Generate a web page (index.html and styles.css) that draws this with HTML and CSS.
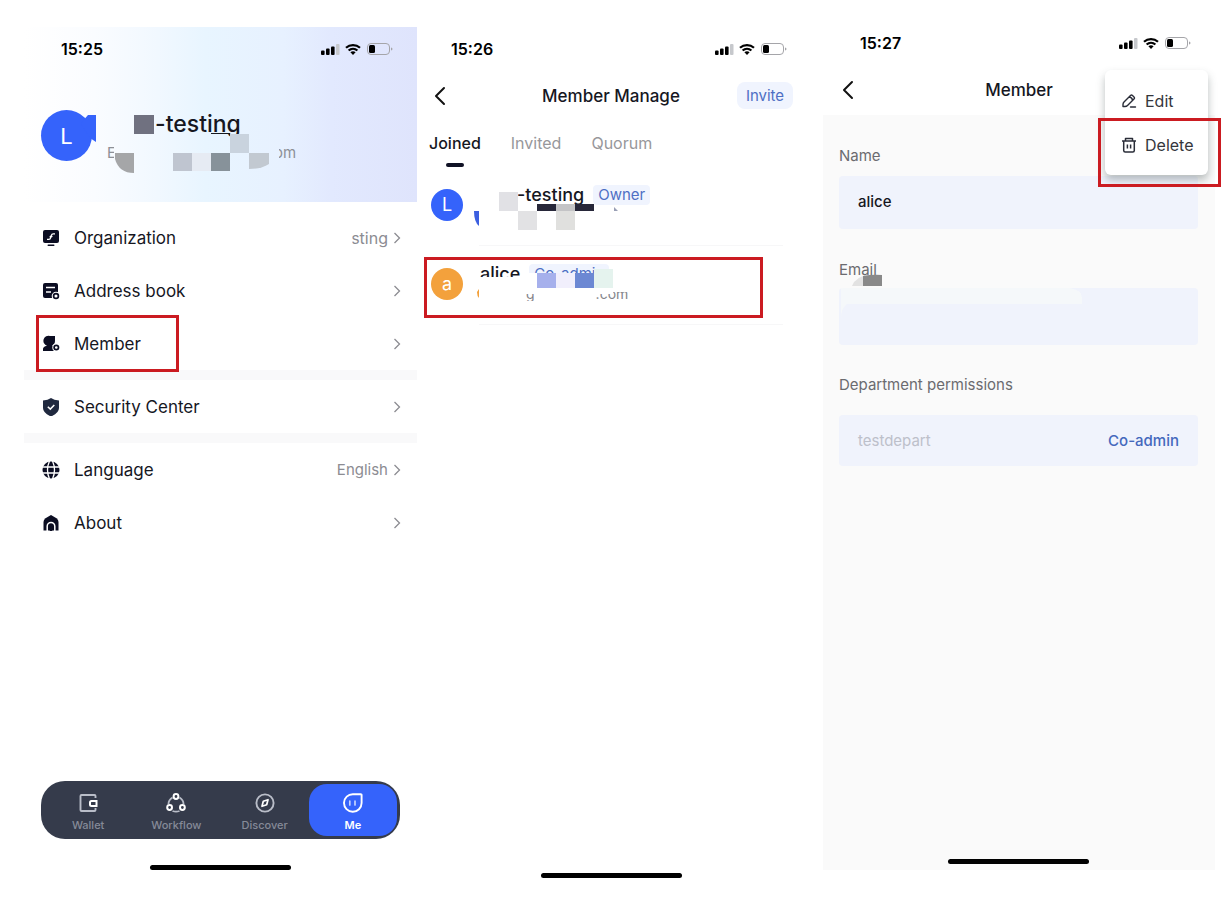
FILE: index.html
```html
<!DOCTYPE html>
<html lang="en">
<head>
<meta charset="utf-8">
<meta name="viewport" content="width=device-width, initial-scale=1">
<title>Member management</title>
<link rel="stylesheet" href="styles.css">
</head>
<body>
<svg class="sprite" aria-hidden="true">
  <symbol id="status" viewBox="0 0 72 14">
    <rect x="0" y="8.500" width="3.600" height="4.500" rx="1"/><rect x="5" y="6.500" width="3.600" height="6.500" rx="1"/><rect x="10" y="4.500" width="3.600" height="8.500" rx="1"/><rect x="15" y="2" width="3.500" height="11" rx="1" fill="#c6c8cc"/>
    <path d="M25 5.800a10.400 10.400 0 0 1 14 0M27.600 8.500a6.600 6.600 0 0 1 8.800 0" fill="none" stroke="#000" stroke-width="2.200"/><path d="M29.400 10.300a4 4 0 0 1 5.200 0L32 13z"/>
    <rect x="46.500" y="1.500" width="22" height="11" rx="3.500" fill="none" stroke="#a5a5a9"/><rect x="48" y="3" width="6" height="8" rx="1.500"/><path d="M70 5.500v3q1.500-.3 1.500-1.500t-1.500-1.500z" fill="#a5a5a9"/>
  </symbol>
  <symbol id="chev" viewBox="0 0 8 12"><path d="M1.500 1l5 5-5 5" fill="none" stroke="#8c8c92" stroke-width="1.300"/></symbol>
  <symbol id="back" viewBox="0 0 12 20"><path d="M10 2L2 10l8 8" fill="none" stroke="#111" stroke-width="2" stroke-linecap="round" stroke-linejoin="round"/></symbol>
</svg>
<main class="screens">
  <section class="phone phone-me">
    <header class="hero">
      <div class="status"><span>15:25</span><svg class="status-icons"><use href="#status"/></svg></div>
      <div class="profile">
        <span class="avatar avatar-lg">L</span>
        <div class="profile-text">
          <h1>-testing</h1>
          <p><span class="mail-start">E</span><span class="mail-end">om</span></p>
        </div>
        <svg class="mosaic" viewBox="0 0 280 70" aria-hidden="true">
          <path d="M40 14q3-5 7-9h8v27l-6-4z" fill="#3563fb"/>
          <rect x="93" y="5" width="20" height="19" fill="#707180"/>
          <rect x="170" y="23" width="19" height="1" fill="#17191f"/>
          <rect x="189" y="24" width="19" height="19" fill="#c9d3de"/>
          <path d="M74 43h19v20q-15 0-19-14z" fill="#a5a6a8"/>
          <rect x="132" y="43" width="19" height="18" fill="#bfc5d0"/>
          <rect x="151" y="43" width="19" height="18" fill="#e6ebf3"/>
          <rect x="170" y="43" width="19" height="18" fill="#87929a"/>
          <path d="M208 43h20v11q-8 5-20 5z" fill="#c2c9d1"/>
        </svg>
      </div>
    </header>
    <nav class="settings" aria-label="Settings">
      <a href="#"><svg viewBox="0 0 18 18"><path d="M3 1h12q2 0 2 2v9q0 2-2 2H3q-2 0-2-2V3q0-2 2-2z" fill="#0b0d22"/><rect x="5.500" y="15.500" width="7" height="1.500" rx=".7" fill="#0b0d22"/><path d="M13 4.800h-1.800q-1.500 0-1.700 1.400T7.600 7.800M10.500 7.400q-1.700 0-1.900 1.400T6.800 10.300H5" fill="none" stroke="#fff" stroke-width="1.300"/></svg><span class="label">Organization</span><span class="value cut">sting</span><svg class="chev"><use href="#chev"/></svg></a>
      <a href="#"><svg viewBox="0 0 18 18"><path d="M3 1h11q2 0 2 2v13H3q-2 0-2-2V3q0-2 2-2z" fill="#0b0d22"/><path d="M4 5.500h9M4 10h5" stroke="#fff" stroke-width="1.500"/><circle cx="14" cy="14" r="4.300" fill="#fff"/><circle cx="14" cy="14" r="2.400" fill="none" stroke="#0b0d22" stroke-width="1.700"/></svg><span class="label">Address book</span><svg class="chev"><use href="#chev"/></svg></a>
      <a href="#" class="marked"><svg viewBox="0 0 18 18"><path d="M8 1h5v5a4.800 4.800 0 0 1-3 4.500l2 .8V16H1v-2q0-2.500 4-3.300A5 5 0 0 1 8 1z" fill="#0b0d22"/><circle cx="14.300" cy="12.500" r="4" fill="#fff"/><circle cx="14.300" cy="12.500" r="2.200" fill="none" stroke="#0b0d22" stroke-width="1.700"/></svg><span class="label">Member</span><svg class="chev"><use href="#chev"/></svg></a>
      <hr>
      <a href="#"><svg viewBox="0 0 18 18"><path d="M9 0q3 2 8 2.500V10q0 5-8 8.500Q1 15 1 10V2.500Q6 2 9 0z" fill="#20293f"/><path d="M5.800 8.700l2.500 2.400 4-4.200" fill="none" stroke="#fff" stroke-width="1.500"/></svg><span class="label">Security Center</span><svg class="chev"><use href="#chev"/></svg></a>
      <hr>
      <a href="#"><svg viewBox="0 0 18 18"><circle cx="9" cy="9" r="8.500" fill="#0b0d22"/><path d="M0 6h18M0 12h18M7.500 0Q3.500 9 7.500 18M10.500 0q4 9 0 18" fill="none" stroke="#fff" stroke-width="1.300"/></svg><span class="label">Language</span><span class="value">English</span><svg class="chev"><use href="#chev"/></svg></a>
      <a href="#"><svg viewBox="0 0 18 18"><path d="M9 1l5.500 3.300Q16.500 6 16.500 8v8.500h-15V8q0-2 2-3.700z" fill="#0b0d22"/><path d="M5.200 17v-4.800a3.800 3.800 0 0 1 7.600 0V17" fill="none" stroke="#fff" stroke-width="1.500"/><path d="M9 12v5" stroke="#0b0d22" stroke-width="2.500"/></svg><span class="label">About</span><svg class="chev"><use href="#chev"/></svg></a>
    </nav>
    <nav class="tabbar" aria-label="Main">
      <a href="#"><svg viewBox="0 0 20 20"><path d="M17.500 5V3q0-1-1-1h-13q-1 0-1 1v14q0 1 1 1h13q1 0 1-1v-2" fill="none" stroke="#b9bdc8" stroke-width="1.900"/><path d="M18.500 8v5h-5q-1.500 0-1.500-1.500v-2Q12 8 13.500 8z" fill="none" stroke="#fff" stroke-width="2"/></svg>Wallet</a>
      <a href="#"><svg viewBox="0 0 20 20"><path d="M6.500 4.500Q2.500 7 2.500 11M13.500 4.500q4 2.500 4 6.500M6.500 18q3.500 1.300 7 0" fill="none" stroke="#b9bdc8" stroke-width="1.800"/><g fill="#353b4b" stroke="#fff" stroke-width="2"><circle cx="10" cy="3.500" r="2.400"/><circle cx="3.600" cy="14.500" r="2.400"/><circle cx="16.400" cy="14.500" r="2.400"/></g></svg>Workflow</a>
      <a href="#"><svg viewBox="0 0 20 20"><circle cx="10" cy="10" r="8.600" fill="none" stroke="#b9bdc8" stroke-width="1.900"/><path d="M13 6.700l-1.300 5L7 13.300l1.300-5z" fill="none" stroke="#fff" stroke-width="1.700" stroke-linejoin="round"/></svg>Discover</a>
      <a href="#" class="active" aria-current="page"><svg viewBox="0 0 20 20"><path d="M18.600 10V2q0-.8-.8-.8H10A8.800 8.800 0 1 0 18.600 10z" fill="none" stroke="#fff" stroke-width="1.900"/><path d="M6.800 8v4M12 8v4" stroke="#c5d3ff" stroke-width="1.700" stroke-linecap="round"/></svg>Me</a>
    </nav>
    <div class="home"></div>
  </section>

  <section class="phone phone-members">
    <div class="status"><span>15:26</span><svg class="status-icons"><use href="#status"/></svg></div>
    <header class="topbar">
      <button class="back" aria-label="Back"><svg viewBox="0 0 12 20"><use href="#back"/></svg></button>
      <h2>Member Manage</h2>
      <button class="invite">Invite</button>
    </header>
    <div class="tabs" role="tablist">
      <button role="tab" aria-selected="true">Joined</button>
      <button role="tab" aria-selected="false">Invited</button>
      <button role="tab" aria-selected="false">Quorum</button>
    </div>
    <ul class="members">
      <li>
        <span class="avatar">L</span>
        <div class="member owner"><b>-testing</b><span class="badge">Owner</span></div>
        <svg class="mosaic" viewBox="0 0 150 50" aria-hidden="true">
          <path d="M0 26h5v15Q0 37 0 26z" fill="#3c5fe0"/>
          <rect x="25" y="7" width="19" height="19" fill="#e1e1e5"/>
          <rect x="63" y="19" width="57" height="7" fill="#272739"/><rect x="82" y="19" width="19" height="7" fill="#c4c4c6"/>
          <rect x="44" y="26" width="19" height="19" fill="#e2e2e4"/><rect x="82" y="26" width="19" height="19" fill="#e0e0de"/>
          <path d="M140 22l4 4h-4z" fill="#999fb5"/>
        </svg>
      </li>
      <li class="marked">
        <span class="avatar orange">a</span>
        <div class="member coadmin"><b>alice</b><span class="badge">Co-admin</span><small><span>g</span><span>.com</span></small></div>
        <svg class="mosaic" viewBox="0 0 150 50" aria-hidden="true">
          <path d="M3 28l2-3v9q-2-2-2-6z" fill="#f3a13c"/>
          <path d="M5 13h49V9h85v21H5z" fill="#fff"/>
          <rect x="63" y="9" width="19" height="15" fill="#a6b0ec"/><rect x="82" y="9" width="19" height="15" fill="#f1effc"/><rect x="101" y="9" width="19" height="15" fill="#6c88d3"/><rect x="120" y="5" width="19" height="19" fill="#e5f3ee"/>
        </svg>
      </li>
    </ul>
    <div class="home"></div>
  </section>

  <section class="phone phone-detail">
    <div class="status"><span>15:27</span><svg class="status-icons"><use href="#status"/></svg></div>
    <header class="topbar">
      <button class="back" aria-label="Back"><svg viewBox="0 0 12 20"><use href="#back"/></svg></button>
      <h2>Member</h2>
      <span></span>
    </header>
    <form class="details">
      <label for="name">Name</label>
      <input id="name" value="alice">
      <label for="email">Email</label>
      <div class="email">
        <input id="email" type="email">
        <svg class="mosaic" viewBox="0 0 250 50" aria-hidden="true"><path d="M13 13q4-10 17-11h13v11z" fill="#e2e2e2"/><path d="M24 3q10-2 19-1v11H24z" fill="#898989"/><path d="M2 15h229q12 2 12 10v6H8q-6 4-6 15z" fill="#f7f9fa" opacity=".75"/></svg>
      </div>
      <h3>Department permissions</h3>
      <div class="dept"><span>testdepart</span><a href="#">Co-admin</a></div>
      <div class="home"></div>
    </form>
    <div class="menu">
      <button><svg viewBox="0 0 16 16"><path d="M3 9l6.500-6.500q1-1 2 0L13 4q1 1 0 2l-6.500 6.500q-1 1-2.500 1H2v-2q0-1.500 1-2.500zM8.300 4q2.800.4 3.200 3.200M9.500 14h5" fill="none" stroke="#2a2d38" stroke-width="1.400" stroke-linecap="round" stroke-linejoin="round"/></svg>Edit</button>
      <button><svg viewBox="0 0 16 16"><path d="M1 4h14M4.500 4V1.500h7V4M2.700 4v9.500q0 1.500 1.500 1.500h7.600q1.500 0 1.500-1.500V4M6.400 7.500v4M9.600 7.500v4" fill="none" stroke="#2a2d38" stroke-width="1.500" stroke-linejoin="round"/></svg>Delete</button>
    </div>
    <div class="menu-mark"></div>
  </section>
</main>
</body>
</html>
```

FILE: styles.css
```css
*, *::before, *::after { box-sizing: border-box; }
body { margin: 0; background: #fff; color: #16171f; font-family: Inter, "Liberation Sans", sans-serif; font-size: 16px; line-height: 20px; }
h1, h2, h3, p, ul { margin: 0; padding: 0; }
ul { list-style: none; }
a { color: inherit; text-decoration: none; }
button { border: 0; padding: 0; background: none; font: inherit; color: inherit; }
.sprite { position: absolute; width: 0; height: 0; }
.screens { display: grid; grid-template-columns: 393fr 406fr 392fr; min-height: 100vh; padding: 0 16px 0 24px; }
.phone { position: relative; display: flex; flex-direction: column; min-width: 0; }
.status { display: flex; align-items: center; justify-content: space-between; height: 20px; font-size: 16px; font-weight: 600; color: #000; }
.status-icons { width: 72px; height: 14px; }
.home { width: 141px; height: 5px; border-radius: 3px; background: #000; align-self: center; }
.mosaic { position: absolute; pointer-events: none; }
.avatar { display: grid; place-items: center; flex: none; width: 32px; height: 32px; border-radius: 50%; background: #3563fb; color: #fff; font-size: 18px; }
.avatar-lg { width: 51px; height: 51px; font-size: 22px; }
.orange { background: #f3a13c; }

.phone-me { padding: 27px 0 30px; }
.hero { height: 175px; background: linear-gradient(90deg, #fff 0%, #fafcff 18%, #f1f8ff 34%, #e8f5ff 46%, #e7f1ff 66%, #e2e9fe 78%, #dfe4fc 100%); }
.phone-me .status { padding: 0 24px 0 37px; margin-top: 12px; }
.profile { position: relative; display: flex; padding: 0 17px; margin-top: 51px; }
.profile .mosaic { left: 17px; top: 0; width: 280px; height: 70px; }
.profile-text { padding-left: 15px; }
.profile h1 { padding-left: 48px; font-size: 23px; line-height: 28px; font-weight: 500; }
.profile p { display: flex; gap: 160px; margin-top: 5px; color: #8d9097; font-size: 15px; }
.mail-start { width: 7px; overflow: hidden; }
.mail-end { clip-path: inset(0 0 0 5px); }
.settings { padding-top: 9px; }
.settings a { position: relative; display: flex; align-items: center; height: 53px; padding: 0 16px 0 18px; }
.settings a > svg { flex: none; width: 18px; height: 18px; }
.settings a > .chev { width: 8px; height: 12px; margin-left: 5px; }
.label { flex: 1; padding-left: 14px; font-size: 17px; }
.value { color: #8c8c92; font-size: 15px; }
.cut { font-size: 16px; clip-path: inset(0 0 0 1px); }
.settings hr { width: 100%; height: 10px; margin: 0; border: 0; background: #f9f9fa; }
.settings .marked::after { content: ""; position: absolute; left: 12px; top: -2px; width: 143px; height: 57px; border: 3px solid #cb1b21; }
.tabbar { display: grid; grid-template-columns: repeat(4, 1fr); height: 58px; margin: auto 17px 26px; padding: 3px; border-radius: 24px; background: #353b4b; color: #858a98; font-size: 11px; font-weight: 500; line-height: 14px; }
.tabbar a { display: flex; flex-direction: column; align-items: center; gap: 5px; padding-top: 9px; border-radius: 18px; }
.tabbar svg { width: 20px; height: 20px; }
.tabbar .active { background: #3563fb; color: #fff; font-weight: 600; }

.phone-members { padding: 39px 30px 22px 12px; }
.phone-members .status { padding: 0 6px 0 22px; }
.phone-members .home { margin-top: auto; }
.topbar { display: grid; grid-template-columns: 60px 1fr 60px; align-items: center; height: 27px; margin-top: 23px; }
.topbar h2 { text-align: center; font-size: 17px; font-weight: 500; }
.back { display: flex; padding-left: 5px; }
.back svg { width: 12px; height: 20px; }
.invite { justify-self: end; width: 56px; height: 27px; border-radius: 8px; background: #f0f4fe; color: #4e6fc4; font-size: 15px; }
.tabs { display: flex; gap: 30px; height: 34px; margin-top: 24px; color: #97979b; }
.tabs button { display: flex; flex-direction: column; align-items: center; justify-content: space-between; height: 34px; }
.tabs [aria-selected="true"] { color: #16171f; font-weight: 500; }
.tabs [aria-selected="true"]::after { content: ""; width: 18px; height: 4px; border-radius: 2px; background: #101225; }
.members li { position: relative; display: flex; height: 79px; padding: 22px 0 0 2px; }
.members li::after { content: ""; position: absolute; left: 50px; right: 10px; bottom: 0; height: 1px; background: #f7f7f8; }
.members .marked::before { content: ""; position: absolute; left: -5px; top: 11px; width: 339px; height: 61px; border: 3px solid #cb1b21; z-index: 1; }
.members .mosaic { left: 45px; top: 18px; width: 150px; height: 50px; }
.member { display: flex; flex-wrap: wrap; align-content: flex-start; align-items: center; gap: 0 9px; margin-top: -4px; width: 220px; }
.member b { font-weight: 500; font-size: 18px; }
.owner { padding-left: 54px; }
.coadmin { padding-left: 17px; }
.badge { padding: 0 5px; border-radius: 4px; background: #f0f4fe; color: #4e6fc4; font-size: 15px; }
.member small { display: flex; gap: 61px; width: 100%; padding-left: 46px; font-size: 14px; color: #85858b; }
.member small span { clip-path: inset(8px 0 3px 0); }

.phone-detail { padding: 33px 0 30px; }
.phone-detail .status { padding: 0 24px 0 37px; }
.phone-detail .topbar { padding: 0 14px; margin-bottom: 12px; }
.details { display: flex; flex-direction: column; flex: 1; padding: 31px 17px 6px 16px; background: #fafafa; color: #6b6b6f; font-size: 15px; }
.details h3 { font: inherit; margin-bottom: 20px; }
.details label { margin-bottom: 10px; }
.details input { width: 100%; height: 53px; padding: 0 19px 2px; border: 0; border-radius: 4px; background: #f0f3fc; color: #16171f; font: 500 15px/20px Inter, sans-serif; margin-bottom: 31px; }
.email { position: relative; }
.details .email input { display: block; height: 57px; margin-bottom: 30px; }
.email .mosaic { left: 0; top: -15px; width: 250px; height: 50px; }
.details label[for="email"] { margin-bottom: 8px; }
.dept { display: flex; align-items: center; justify-content: space-between; height: 51px; padding: 0 19px; border-radius: 4px; background: #f0f3fc; color: #bdc0ca; }
.dept a { color: #4468bd; font-weight: 500; }
.details .home { margin-top: auto; }
.menu { position: absolute; right: 7px; top: 70px; width: 103px; height: 105px; padding: 9px 0 0 16px; border-radius: 6px; background: #fff; box-shadow: 0 5px 9px rgba(60, 75, 75, .35); color: #35363c; }
.menu button { display: flex; align-items: center; gap: 8px; height: 44px; }
.menu svg { width: 16px; height: 16px; }
.menu-mark { position: absolute; right: -6px; top: 118px; width: 123px; height: 69px; border: 3px solid #cb1b21; }
```
